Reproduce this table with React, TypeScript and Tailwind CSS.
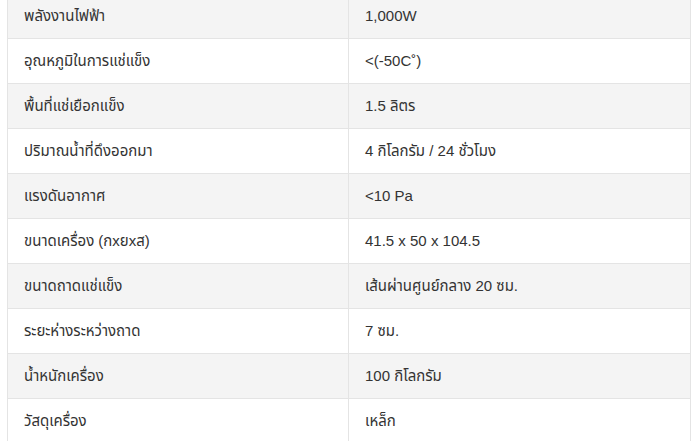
import React from "react";

const rows: [string, string][] = [
  ["พลังงานไฟฟ้า", "1,000W"],
  ["อุณหภูมิในการแช่แข็ง", "<(-50C˚)"],
  ["พื้นที่แช่เยือกแข็ง", "1.5 ลิตร"],
  ["ปริมาณน้ำที่ดึงออกมา", "4 กิโลกรัม / 24 ชั่วโมง"],
  ["แรงดันอากาศ", "<10 Pa"],
  ["ขนาดเครื่อง (กxยxส)", "41.5 x 50 x 104.5"],
  ["ขนาดถาดแช่แข็ง", "เส้นผ่านศูนย์กลาง 20 ซม."],
  ["ระยะห่างระหว่างถาด", "7 ซม."],
  ["น้ำหนักเครื่อง", "100 กิโลกรัม"],
  ["วัสดุเครื่อง", "เหล็ก"],
];

export default function App() {
  return (
    <div className="w-[700px] h-[441px] overflow-hidden bg-white">
      <div
        className="-mt-[6px] ml-[7px] w-[684px] border-l border-r border-[#e4e4e4] text-[15px] text-[#333333]"
        style={{ fontFamily: '"Liberation Sans", Arial, "Noto Sans Thai", sans-serif' }}
      >
        {rows.map(([k, v], i) => (
          <div
            key={i}
            className={`flex h-[45px] border-b border-[#e4e4e4] ${i % 2 === 0 ? "bg-[#f4f4f4]" : "bg-white"}`}
          >
            <div className="w-[341px] border-r border-[#e4e4e4] pl-[16px] flex items-center">{k}</div>
            <div className="flex-1 pl-[16px] flex items-center">{v}</div>
          </div>
        ))}
      </div>
    </div>
  );
}
